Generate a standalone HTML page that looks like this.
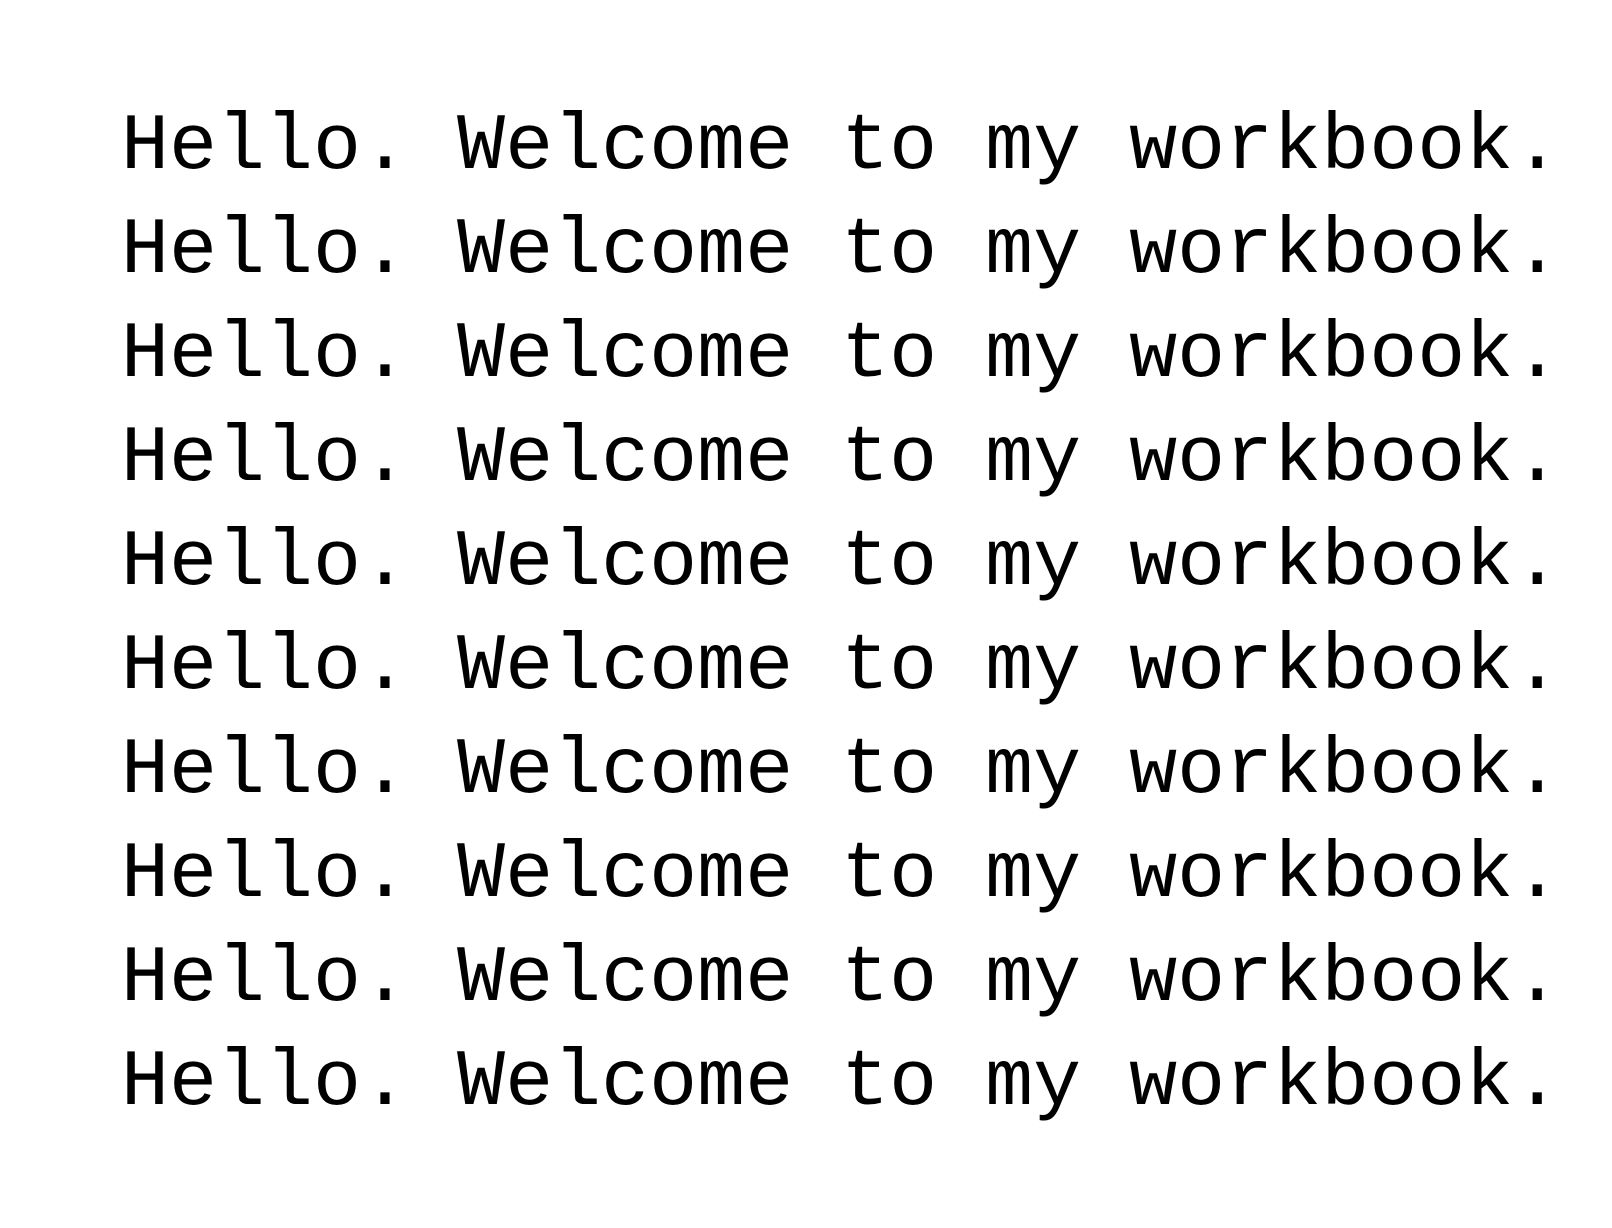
<!DOCTYPE html>
<html>
<head>
<meta charset="utf-8">
<style>
  html, body { margin: 0; padding: 0; background: #fff; }
  body { width: 1612px; height: 1228px; overflow: hidden; position: relative; }
  .t {
    position: absolute;
    left: 121px;
    top: 96px;
    font-family: "Liberation Mono", monospace;
    font-size: 80px;
    line-height: 104px;
    color: #000;
    white-space: pre;
  }
</style>
</head>
<body>
<div class="t">Hello. Welcome to my workbook.
Hello. Welcome to my workbook.
Hello. Welcome to my workbook.
Hello. Welcome to my workbook.
Hello. Welcome to my workbook.
Hello. Welcome to my workbook.
Hello. Welcome to my workbook.
Hello. Welcome to my workbook.
Hello. Welcome to my workbook.
Hello. Welcome to my workbook.</div>
</body>
</html>
